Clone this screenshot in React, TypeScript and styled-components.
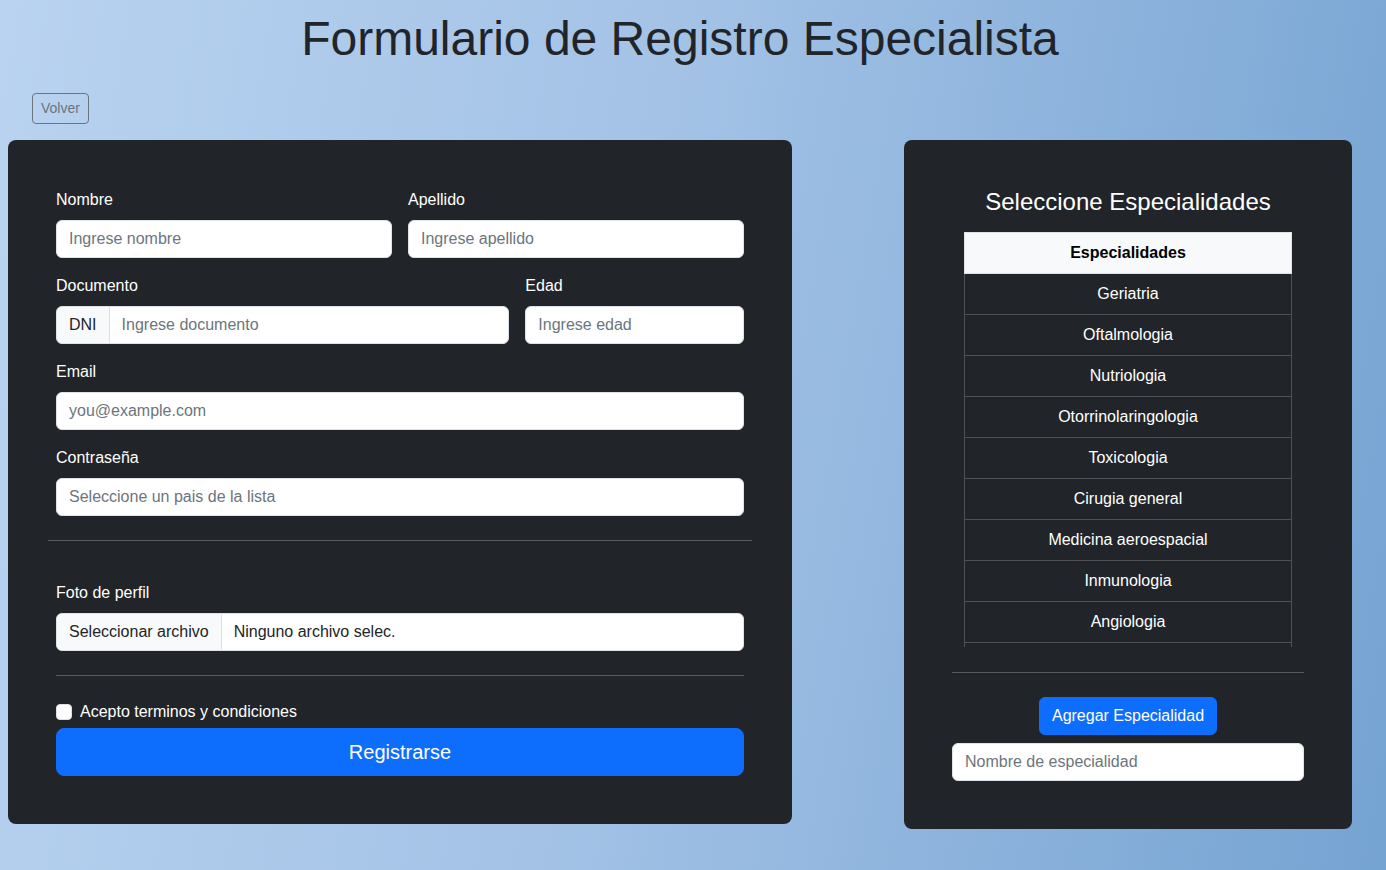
import React from "react";
import styled, { createGlobalStyle } from "styled-components";

const Global = createGlobalStyle`
  * { box-sizing: border-box; }
  html, body { margin: 0; padding: 0; }
  body {
    font-family: "Liberation Sans", Arial, sans-serif;
    font-size: 16px;
    line-height: 1.5;
    color: #212529;
    min-height: 870px;
    background: linear-gradient(100deg, #b9d3f0 0%, #a3c2e6 45%, #75a3d2 100%);
  }
`;

const Page = styled.div`
  width: 1344px;
  margin-left: 8px;
  padding-top: 10px;
`;

const Title = styled.h1`
  margin: 0;
  font-size: 48px;
  font-weight: 400;
  line-height: 57.6px;
  text-align: center;
  color: #212529;
`;

const BackBar = styled.div`
  padding: 25px 24px 16px;
  display: flex;
`;

const BackButton = styled.button`
  font-family: inherit;
  font-size: 14px;
  line-height: 21px;
  padding: 4px 8px;
  background: transparent;
  color: #6c757d;
  border: 1px solid #6c757d;
  border-radius: 4px;
`;

const Columns = styled.div`
  display: grid;
  grid-template-columns: repeat(12, 112px);
  align-items: start;
`;

const Card = styled.div<{ $span: string }>`
  grid-column: ${(p) => p.$span};
  background: #212529;
  border-radius: 8px;
  padding: 48px;
  color: #fff;
`;

const FormGrid = styled.div`
  display: grid;
  grid-template-columns: repeat(12, 1fr);
  column-gap: 16px;
  row-gap: 16px;
`;

const Field = styled.div<{ $cols: number }>`
  grid-column: span ${(p) => p.$cols};
  display: flex;
  flex-direction: column;
`;

const Label = styled.label`
  display: block;
  font-size: 16px;
  line-height: 24px;
  margin-bottom: 8px;
  color: #fff;
`;

const Input = styled.input`
  display: block;
  width: 100%;
  height: 38px;
  font-family: inherit;
  font-size: 16px;
  line-height: 24px;
  padding: 6px 12px;
  color: #212529;
  background: #fff;
  border: 1px solid #dee2e6;
  border-radius: 6px;
  &::placeholder { color: #6c757d; opacity: 1; }
`;

const Group = styled.div`
  display: flex;
  width: 100%;
`;

const Addon = styled.span`
  display: flex;
  align-items: center;
  height: 38px;
  padding: 6px 12px;
  font-size: 16px;
  color: #212529;
  background: #f8f9fa;
  border: 1px solid #dee2e6;
  border-radius: 6px 0 0 6px;
  white-space: nowrap;
`;

const GroupInput = styled(Input)`
  flex: 1;
  border-radius: 0 6px 6px 0;
  margin-left: -1px;
`;

const FileBox = styled.div`
  display: flex;
  height: 38px;
  background: #fff;
  border: 1px solid #dee2e6;
  border-radius: 6px;
  overflow: hidden;
  color: #212529;
`;

const FileButton = styled.span`
  display: flex;
  align-items: center;
  padding: 0 12px;
  background: #f8f9fa;
  border-right: 1px solid #dee2e6;
  white-space: nowrap;
`;

const FileName = styled.span`
  display: flex;
  align-items: center;
  padding: 0 12px;
`;

const Rule = styled.hr<{ $top: number; $bottom: number; $bleed?: number }>`
  border: 0;
  border-top: 1px solid rgba(255, 255, 255, 0.25);
  margin: ${(p) => `${p.$top}px ${-(p.$bleed ?? 0)}px ${p.$bottom}px`};
`;

const CheckRow = styled.label`
  display: flex;
  align-items: center;
  gap: 8px;
  height: 24px;
  margin-bottom: 4px;
  color: #fff;
`;

const CheckBox = styled.span`
  width: 16px;
  height: 16px;
  background: #fff;
  border: 1px solid #dee2e6;
  border-radius: 4px;
`;

const PrimaryLarge = styled.button`
  width: 100%;
  height: 48px;
  font-family: inherit;
  font-size: 20px;
  line-height: 30px;
  padding: 0 16px 0;
  color: #fff;
  background: #0d6efd;
  border: 1px solid #0d6efd;
  border-radius: 8px;
`;

const SideTitle = styled.h4`
  margin: 0 0 16px;
  font-size: 24px;
  line-height: 28px;
  font-weight: 400;
  text-align: center;
  color: #fff;
`;

const TableScroll = styled.div`
  margin: 0 12px;
  height: 415px;
  overflow: hidden;
`;

const Table = styled.table`
  width: 100%;
  border-collapse: collapse;
  text-align: center;
`;

const HeadCell = styled.th`
  height: 41px;
  padding: 8px;
  font-weight: 700;
  color: #000;
  background: #f8f9fa;
  border: 1px solid #dee2e6;
`;

const Cell = styled.td`
  height: 41px;
  padding: 8px;
  color: #fff;
  background: #212529;
  border: 1px solid #4d5154;
`;

const Center = styled.div`
  display: flex;
  justify-content: center;
  margin-bottom: 8px;
`;

const PrimaryButton = styled.button`
  height: 38px;
  font-family: inherit;
  font-size: 16px;
  padding: 6px 12px;
  color: #fff;
  background: #0d6efd;
  border: 1px solid #0d6efd;
  border-radius: 6px;
`;

const specialties = [
  "Geriatria",
  "Oftalmologia",
  "Nutriologia",
  "Otorrinolaringologia",
  "Toxicologia",
  "Cirugia general",
  "Medicina aeroespacial",
  "Inmunologia",
  "Angiologia",
];

export default function App() {
  return (
    <>
      <Global />
      <Page>
        <Title>Formulario de Registro Especialista</Title>
        <BackBar>
          <BackButton>Volver</BackButton>
        </BackBar>
        <Columns>
          <Card $span="1 / span 7">
            <FormGrid>
              <Field $cols={6}>
                <Label>Nombre</Label>
                <Input placeholder="Ingrese nombre" />
              </Field>
              <Field $cols={6}>
                <Label>Apellido</Label>
                <Input placeholder="Ingrese apellido" />
              </Field>
              <Field $cols={8}>
                <Label>Documento</Label>
                <Group>
                  <Addon>DNI</Addon>
                  <GroupInput placeholder="Ingrese documento" />
                </Group>
              </Field>
              <Field $cols={4}>
                <Label>Edad</Label>
                <Input placeholder="Ingrese edad" />
              </Field>
              <Field $cols={12}>
                <Label>Email</Label>
                <Input placeholder="you@example.com" />
              </Field>
              <Field $cols={12}>
                <Label>Contraseña</Label>
                <Input placeholder="Seleccione un pais de la lista" />
              </Field>
            </FormGrid>
            <Rule $top={24} $bottom={40} $bleed={8} />
            <Field $cols={12}>
              <Label>Foto de perfil</Label>
              <FileBox>
                <FileButton>Seleccionar archivo</FileButton>
                <FileName>Ninguno archivo selec.</FileName>
              </FileBox>
            </Field>
            <Rule $top={24} $bottom={24} />
            <CheckRow>
              <CheckBox />
              Acepto terminos y condiciones
            </CheckRow>
            <PrimaryLarge>Registrarse</PrimaryLarge>
          </Card>
          <Card $span="9 / span 4">
            <SideTitle>Seleccione Especialidades</SideTitle>
            <TableScroll>
              <Table>
                <thead>
                  <tr>
                    <HeadCell>Especialidades</HeadCell>
                  </tr>
                </thead>
                <tbody>
                  {specialties.map((s) => (
                    <tr key={s}>
                      <Cell>{s}</Cell>
                    </tr>
                  ))}
                  <tr>
                    <Cell />
                  </tr>
                </tbody>
              </Table>
            </TableScroll>
            <Rule $top={25} $bottom={24} />
            <Center>
              <PrimaryButton>Agregar Especialidad</PrimaryButton>
            </Center>
            <Input placeholder="Nombre de especialidad" />
          </Card>
        </Columns>
      </Page>
    </>
  );
}
